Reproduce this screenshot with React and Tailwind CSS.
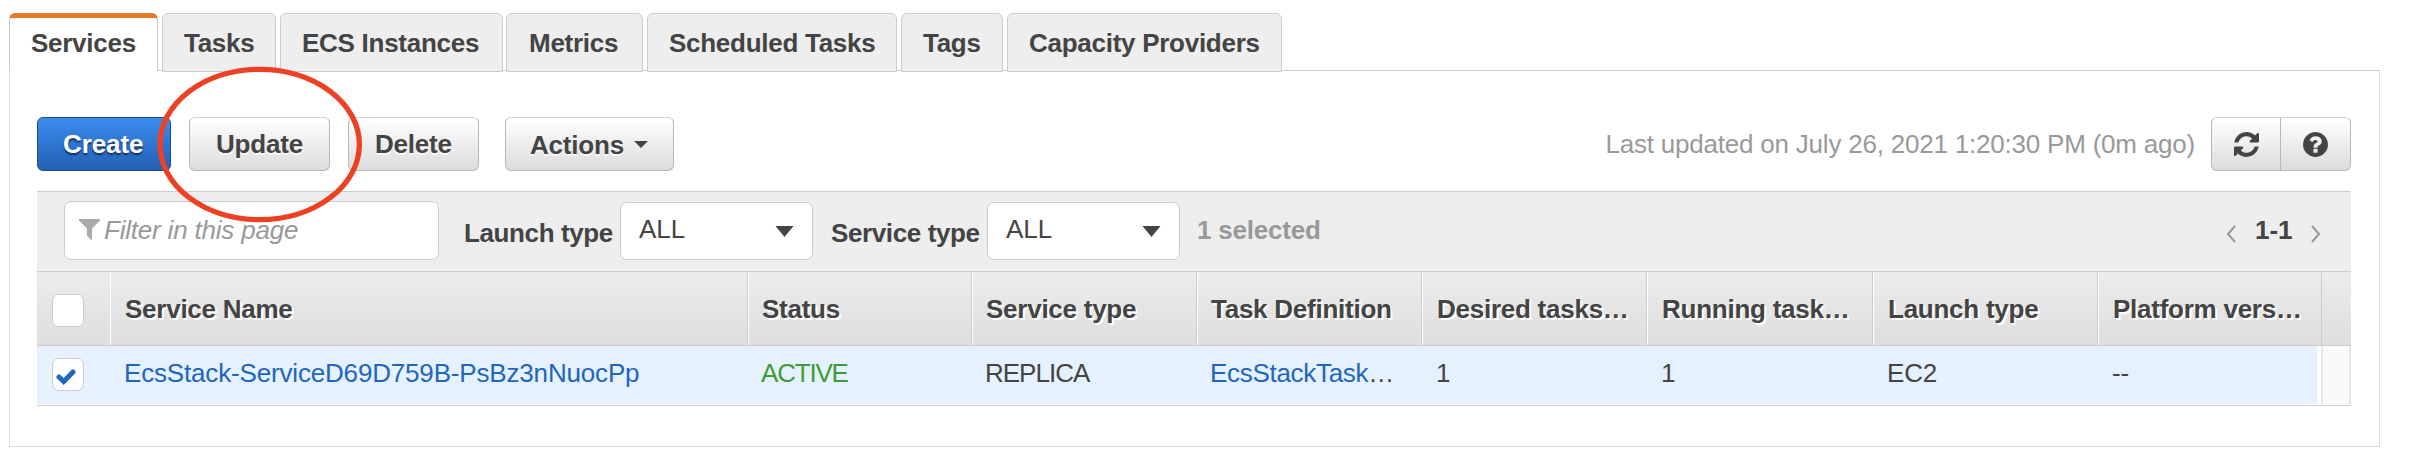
import React from "react";

const tabs = [
  { label: "Services", cls: "w-[149px] pl-[21px]", active: true },
  { label: "Tasks", cls: "w-[114px] pl-[21px] ml-[4px]" },
  { label: "ECS Instances", cls: "w-[223px] pl-[21px] ml-[4px]" },
  { label: "Metrics", cls: "w-[137px] pl-[22px] ml-[3px]" },
  { label: "Scheduled Tasks", cls: "w-[250px] pl-[21px] ml-[4px]" },
  { label: "Tags", cls: "w-[102px] pl-[21px] ml-[4px]" },
  { label: "Capacity Providers", cls: "w-[275px] pl-[21px] ml-[4px]" },
];

const columns = [
  { title: "Service Name", value: "EcsStack-ServiceD69D759B-PsBz3nNuocPp", w: "w-[638px] pl-[14px]", tone: "text-[#2265bd]" },
  { title: "Status", value: "ACTIVE", w: "w-[224px] pl-[13px]", tone: "text-[#3f9c35] tracking-[-1.2px]" },
  { title: "Service type", value: "REPLICA", w: "w-[225px] pl-[13px]", tone: "tracking-[-1px]" },
  { title: "Task Definition", value: "EcsStackTask", more: "…", w: "w-[225px] pl-[13px]", tone: "text-[#2265bd] tracking-[-0.3px]" },
  { title: "Desired tasks…", value: "1", w: "w-[225px] pl-[14px]" },
  { title: "Running task…", value: "1", w: "w-[226px] pl-[14px]" },
  { title: "Launch type", value: "EC2", w: "w-[225px] pl-[14px]" },
  { title: "Platform vers…", value: "--", w: "w-[224px] pl-[14px]" },
];

const grayButton =
  "h-[54px] flex items-center rounded-[6px] border border-[#b8b8b8] border-t-[#d4d4d4] bg-linear-to-b from-white to-[#dcdcdc] font-bold tracking-[-0.2px] [text-shadow:0_2px_0_rgba(255,255,255,0.8)]";

function Select() {
  return (
    <div className="w-[193px] h-[58px] mt-[10px] rounded-[7px] border border-[#ccc] bg-white flex items-center px-[18px] justify-between">
      <span className="-mt-[4px]">ALL</span>
      <svg className="w-[19px] h-[11px]" viewBox="0 0 19 11"><path d="M.5 0h18L9.5 11z" fill="#444" /></svg>
    </div>
  );
}

function Checkbox({ checked }) {
  return (
    <div className="w-[32px] h-[33px] rounded-[7px] border border-[#ccc] bg-white flex items-center justify-center">
      {checked && (
        <svg className="w-[20px] h-[16px] mt-[4px] -ml-[4px]" viewBox="0 0 20 16">
          <path d="M3 8l4.700 4.500L17 3" fill="none" stroke="#2265bd" strokeWidth="5" strokeLinecap="round" />
        </svg>
      )}
    </div>
  );
}

export default function App() {
  return (
    <div className="relative w-[2418px] h-[470px] bg-white pt-[13px] pl-[9px] text-[26px] leading-[30px] text-[#444] font-['Liberation_Sans',Arial,sans-serif] whitespace-nowrap overflow-hidden">
      <div className="flex h-[59px]">
        {tabs.map((t) => (
          <div
            key={t.label}
            className={
              "relative z-10 rounded-t-[6px] font-bold tracking-[-0.27px] border-[#ccc] " +
              (t.active
                ? "h-[58px] border-x border-t-[5px] border-t-[#e47a2c] bg-white pt-[10px] "
                : "h-[59px] border bg-[#eee] pt-[14px] ") +
              t.cls
            }
          >
            {t.label}
          </div>
        ))}
      </div>

      <div className="-mt-[2px] w-[2371px] h-[377px] border border-[#ddd] border-t-[#ccc] pl-[27px] pt-[46px]">
        <div className="flex h-[54px] w-[2314px]">
          <div className="w-[134px] h-[54px] flex items-center pl-[25px] rounded-[6px] border border-[#1c4f92] bg-linear-to-b from-[#3b8cee] to-[#2361b5] text-white font-bold tracking-[-0.1px] [text-shadow:0_2px_2px_rgba(0,0,0,0.6)]">
            Create
          </div>
          <div className={"ml-[18px] w-[141px] pl-[26px] " + grayButton}>Update</div>
          <div className={"ml-[18px] w-[131px] pl-[26px] " + grayButton}>Delete</div>
          <div className={"ml-[26px] w-[169px] pl-[24px] " + grayButton}>
            <span className="mt-[2px]">Actions</span>
            <svg className="ml-[10px] w-[14px] h-[7px]" viewBox="0 0 14 7"><path d="M0 0h14L7 7z" fill="#444" /></svg>
          </div>
          <div className="ml-auto flex">
            <span className="mt-[12px] mr-[16px] text-[#999] tracking-[-0.21px]">Last updated on July 26, 2021 1:20:30 PM (0m ago)</span>
            <div className={"w-[140px] " + grayButton}>
              <div className="w-[69px] h-[52px] border-r border-[#b8b8b8] flex items-center justify-center">
                <svg className="w-[25px] h-[25px]" viewBox="0 0 1536 1536">
                  <path fill="#444" d="M1511 928q0 5-1 7-64 268-268 434.500t-478 166.500q-146 0-282.500-55t-243.500-157l-129 129q-19 19-45 19t-45-19-19-45v-448q0-26 19-45t45-19h448q26 0 45 19t19 45-19 45l-137 137q71 66 161 102t187 36q134 0 250-65t186-179q11-17 53-117 8-23 30-23h192q13 0 22.500 9.500t9.500 22.500zm25-800v448q0 26-19 45t-45 19h-448q-26 0-45-19t-19-45 19-45l138-138q-148-137-349-137-134 0-250 65t-186 179q-11 17-53 117-8 23-30 23h-199q-13 0-22.500-9.500t-9.500-22.500v-7q65-268 270-434.500t480-166.500q146 0 284 55.500t245 156.500l130-129q19-19 45-19t45 19 19 45z" />
                </svg>
              </div>
              <div className="flex-1 flex items-center justify-center">
                <svg className="w-[25px] h-[25px]" viewBox="0 128 1536 1536">
                  <path fill="#444" d="M896 1376v-192q0-14-9-23t-23-9h-192q-14 0-23 9t-9 23v192q0 14 9 23t23 9h192q14 0 23-9t9-23zm256-672q0-88-55.500-163t-138.500-116-170-41q-243 0-371 213-15 24 8 42l132 100q7 6 19 6 16 0 25-12 53-68 86-92 34-24 86-24 48 0 85.500 26t37.500 59q0 38-20 61t-68 45q-63 28-115.500 86.500t-52.500 125.500v36q0 14 9 23t23 9h192q14 0 23-9t9-23q0-19 21.500-49.500t54.500-49.500q32-18 49-28.500t46-35 44.500-48 28-60.500 12.500-81zm384 192q0 209-103 385.500t-279.500 279.500-385.500 103-385.500-103-279.500-279.500-103-385.500 103-385.500 279.500-279.500 385.500-103 385.500 103 279.500 279.500 103 385.500z" />
                </svg>
              </div>
            </div>
          </div>
        </div>

        <div className="mt-[20px] w-[2314px] h-[81px] border-y border-[#ccc] bg-[#eee] flex">
          <div className="mt-[9px] ml-[27px] w-[375px] h-[59px] rounded-[7px] border border-[#ccc] bg-white flex pl-[14px] text-[#999]">
            <svg className="mt-[17px] w-[21px] h-[21px]" viewBox="0 0 21 21"><path d="M0 0h21v1.500L13 9.500V20.500h-1.500L8 16.500v-7L0 1.500z" fill="#aaa" /></svg>
            <span className="ml-[4px] mt-[13px] italic tracking-[-0.2px]">Filter in this page</span>
          </div>
          <span className="ml-[25px] w-[156px] mt-[26px] font-bold tracking-[-0.38px]">Launch type</span>
          <Select />
          <span className="ml-[18px] w-[156px] mt-[26px] font-bold tracking-[-0.38px]">Service type</span>
          <Select />
          <span className="ml-[17px] mt-[23px] font-bold text-[#999] tracking-[-0.2px]">1 selected</span>
          <div className="ml-auto mr-[30px] flex">
            <svg className="mt-[33px] w-[10px] h-[18px]" viewBox="0 0 10 18"><path d="M9 1L2 9l7 8" fill="none" stroke="#999" strokeWidth="2" /></svg>
            <span className="ml-[19px] mt-[23px] w-[56px] font-bold">1-1</span>
            <svg className="mt-[33px] w-[10px] h-[18px]" viewBox="0 0 10 18"><path d="M1 1l7 8-7 8" fill="none" stroke="#999" strokeWidth="2" /></svg>
          </div>
        </div>

        <div className="w-[2314px] h-[74px] border-b border-[#ccc] bg-linear-to-b from-[#ececec] to-[#dedede] flex">
          <div className="w-[73px] shrink-0 pl-[15px] pt-[22px]"><Checkbox /></div>
          {columns.map((c) => (
            <div key={c.title} className={"shrink-0 border-l border-l-white border-r border-r-[#ccc] pt-[22px] font-bold tracking-[-0.25px] [text-shadow:2px_2px_0_#fff] " + c.w}>
              {c.title}
            </div>
          ))}
        </div>

        <div className="w-[2314px] h-[60px] border-b border-[#ccc] pb-px flex">
          <div className="w-[2280px] shrink-0 bg-[#e5f1fe] flex">
            <div className="w-[73px] shrink-0 pl-[15px] pt-[12px]"><Checkbox checked /></div>
            {columns.map((c) => (
              <div key={c.title} className={"shrink-0 pt-[12px] tracking-[-0.17px] " + c.w}>
                <span className={c.tone}>{c.value}</span>{c.more}
              </div>
            ))}
          </div>
          <div className="ml-[4px] w-[30px] border-x-2 border-[#e6e6e6] bg-[#fafafa]" />
        </div>
      </div>

      <svg className="absolute z-20 left-[157px] top-[66px] w-[206px] h-[158px]" viewBox="157 66 206 158">
        <ellipse cx="259.700" cy="144.500" rx="99.700" ry="75.200" fill="none" stroke="#ee4023" strokeWidth="5.300" />
      </svg>
    </div>
  );
}
